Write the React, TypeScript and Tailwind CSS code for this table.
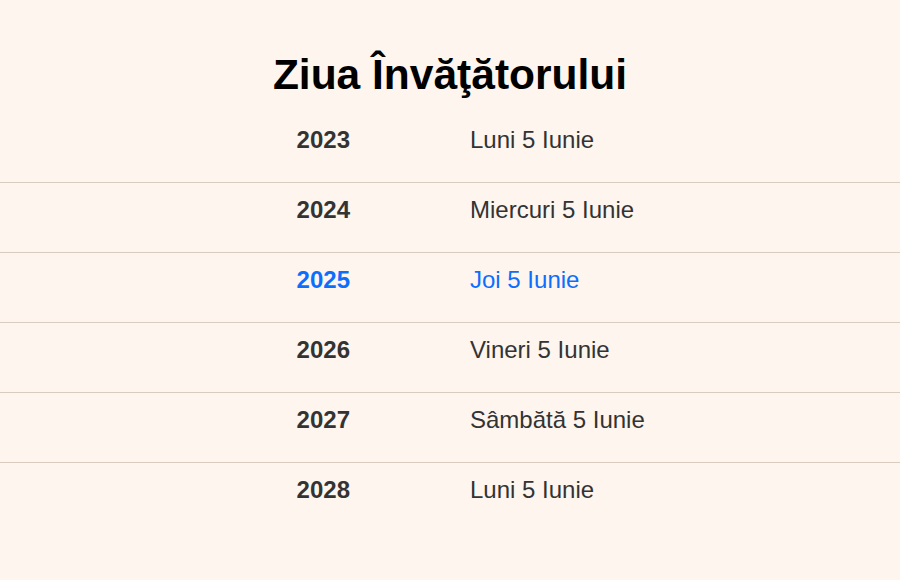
import React from 'react';

const rows = [
  { year: '2023', day: 'Luni 5 Iunie' },
  { year: '2024', day: 'Miercuri 5 Iunie' },
  { year: '2025', day: 'Joi 5 Iunie', current: true },
  { year: '2026', day: 'Vineri 5 Iunie' },
  { year: '2027', day: 'Sâmbătă 5 Iunie' },
  { year: '2028', day: 'Luni 5 Iunie' },
];

const App: React.FC = () => {
  return (
    <div className="min-h-[580px] w-[900px] bg-[#fdf5ee] font-['Liberation_Sans',Arial,sans-serif]">
      <h1 className="pt-[54px] mb-[17px] text-center text-[42.5px] leading-[42px] font-bold text-black">
        Ziua Învăţătorului
      </h1>
      <div>
        {rows.map((r, i) => (
          <div
            key={r.year}
            className={`flex h-[70px] pt-[15px] text-2xl leading-6 ${
              i < rows.length - 1 ? 'border-b border-[#d9cbbd]' : ''
            } ${r.current ? 'text-[#0d6efd]' : 'text-[#333333]'}`}
          >
            <span className="w-[350px] text-right font-bold">{r.year}</span>
            <span className="pl-[120px]">{r.day}</span>
          </div>
        ))}
      </div>
    </div>
  );
};

export default App;
